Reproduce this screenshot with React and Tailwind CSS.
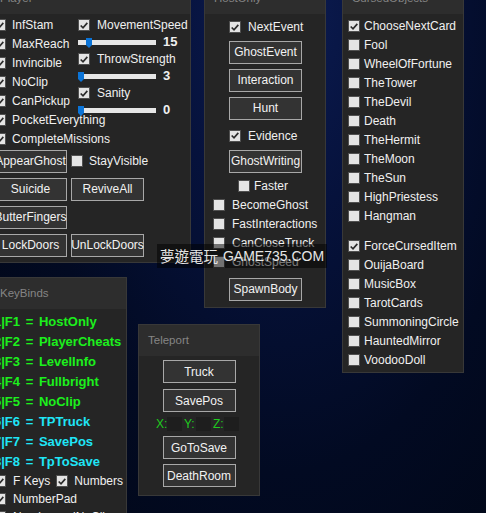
import React from "react";

const Box = ({ checked }) => (
  <span className="w-[12px] h-[12px] shrink-0 bg-[#e4e4e4] border border-[#505050] flex items-center justify-center">
    {checked && (
      <svg viewBox="0 0 12 12" className="w-[11px] h-[11px]">
        <path d="M2 6 L4.8 8.8 L10 2.8" stroke="#2b2b2b" strokeWidth="2" fill="none" />
      </svg>
    )}
  </span>
);

const Check = ({ label, checked, gap = "gap-[4px]", h = "h-[19px]" }) => (
  <div className={`flex items-center ${gap} ${h} whitespace-nowrap`}>
    <Box checked={checked} />
    <span>{label}</span>
  </div>
);

const Btn = ({ children, className = "" }) => (
  <div className={`h-[23px] w-[73px] shrink-0 flex items-center justify-center border-[1.5px] border-[#a8a8a8] bg-[#333333] text-[#f2f2f2] whitespace-nowrap ${className}`}>
    {children}
  </div>
);

const Thumb = () => (
  <svg viewBox="0 0 6 10" className="w-[6px] h-[10px] block">
    <polygon points="0,0 6,0 6,7 3,10 0,7" fill="#0b74d8" />
  </svg>
);

const Window = ({ title, className, children }) => (
  <div className={`absolute bg-[#252525] border border-[#383838] overflow-hidden ${className}`}>
    <div className="h-[31px] bg-[#2d2d2d] pl-[9px] flex items-end pb-[7px] text-[11.5px] text-[#858585]">{title}</div>
    {children}
  </div>
);

const keys = [
  ["1|F1", "HostOnly", "text-[#1cf01c]"],
  ["2|F2", "PlayerCheats", "text-[#1cf01c]"],
  ["3|F3", "LevelInfo", "text-[#1cf01c]"],
  ["4|F4", "Fullbright", "text-[#1cf01c]"],
  ["5|F5", "NoClip", "text-[#1cf01c]"],
  ["6|F6", "TPTruck", "text-[#1fe6f7]"],
  ["7|F7", "SavePos", "text-[#1fe6f7]"],
  ["8|F8", "TpToSave", "text-[#1fe6f7]"],
];

const cards = ["ChooseNextCard", "Fool", "WheelOfFortune", "TheTower", "TheDevil", "Death", "TheHermit", "TheMoon", "TheSun", "HighPriestess", "Hangman"];
const items = ["ForceCursedItem", "OuijaBoard", "MusicBox", "TarotCards", "SummoningCircle", "HauntedMirror", "VoodooDoll"];

export default function App() {
  return (
    <div className="relative w-[486px] h-[513px] overflow-hidden bg-[radial-gradient(ellipse_at_58%_0%,#0c1c52_0%,#06123c_30%,#020a22_65%,#010716_100%)] font-['Liberation_Sans',sans-serif] text-[12px] text-[#f0f0f0]">

      {/* Player */}
      <Window title="Player" className="left-[-10px] top-[-18px] w-[201px] h-[281px]">
        <div className="pl-[3px]">
          <div className="flex">
            <div className="w-[84px] pt-[1.5px] flex flex-col">
              {["InfStam", "MaxReach", "Invincible", "NoClip", "CanPickup", "PocketEverything", "CompleteMissions"].map((l) => (
                <Check key={l} label={l} checked gap="gap-[6px]" />
              ))}
            </div>
            <div className="pt-[2.5px] flex flex-col">
              <Check label="MovementSpeed" checked gap="gap-[7px]" h="h-[17px]" />
              <div className="h-[17px] flex items-center">
                <div className="relative w-[78px] h-[5px] bg-[#e6e6e6]">
                  <div className="absolute left-[8px] top-[-2px]"><Thumb /></div>
                </div>
                <span className="ml-[7px] font-bold text-[13px]">15</span>
              </div>
              <Check label="ThrowStrength" checked gap="gap-[7px]" h="h-[17px]" />
              <div className="h-[17px] flex items-center">
                <div className="relative w-[78px] h-[5px] bg-[#e6e6e6]">
                  <div className="absolute left-0 top-[-2px]"><Thumb /></div>
                </div>
                <span className="ml-[7px] font-bold text-[13px]">3</span>
              </div>
              <Check label="Sanity" checked gap="gap-[7px]" h="h-[17px]" />
              <div className="h-[17px] flex items-center">
                <div className="relative w-[78px] h-[5px] bg-[#e6e6e6]">
                  <div className="absolute left-0 top-[-2px]"><Thumb /></div>
                </div>
                <span className="ml-[7px] font-bold text-[13px]">0</span>
              </div>
            </div>
          </div>
          <div className="mt-[1px] flex flex-col gap-[5px]">
            <div className="flex gap-[4px] items-center">
              <Btn>AppearGhost</Btn>
              <Check label="StayVisible" gap="gap-[6px]" />
            </div>
            <div className="flex gap-[4px]">
              <Btn>Suicide</Btn>
              <Btn>ReviveAll</Btn>
            </div>
            <div className="flex gap-[4px]">
              <Btn>ButterFingers</Btn>
            </div>
            <div className="flex gap-[4px]">
              <Btn>LockDoors</Btn>
              <Btn>UnLockDoors</Btn>
            </div>
          </div>
        </div>
      </Window>

      {/* HostOnly */}
      <Window title="HostOnly" className="left-[204px] top-[-18px] w-[122px] h-[326px]">
        <div className="flex flex-col pt-[3.5px]">
          <div className="pl-[24px]"><Check label="NextEvent" checked gap="gap-[7px]" /></div>
          <Btn className="ml-[24px] mt-[4px]">GhostEvent</Btn>
          <Btn className="ml-[24px] mt-[5px]">Interaction</Btn>
          <Btn className="ml-[24px] mt-[5px]">Hunt</Btn>
          <div className="pl-[24px] mt-[6.5px]"><Check label="Evidence" checked gap="gap-[7px]" /></div>
          <Btn className="ml-[24px] mt-[4.5px]">GhostWriting</Btn>
          <div className="pl-[33px] mt-[3.5px]"><Check label="Faster" gap="gap-[4px]" /></div>
          <div className="pl-[8px] flex flex-col">
            {["BecomeGhost", "FastInteractions", "CanCloseTruck", "GhostSpeed"].map((l) => (
              <Check key={l} label={l} gap="gap-[7px]" />
            ))}
          </div>
          <Btn className="ml-[24px] mt-[6.5px]">SpawnBody</Btn>
        </div>
      </Window>

      {/* CursedObjects */}
      <Window title="CursedObjects" className="left-[342px] top-[-18px] w-[122px] h-[391px]">
        <div className="pl-[5px] pt-[2.5px] flex flex-col">
          {cards.map((l, i) => (
            <Check key={l} label={l} checked={i === 0} />
          ))}
          <div className="h-[11px]" />
          {items.map((l, i) => (
            <Check key={l} label={l} checked={i === 0} />
          ))}
        </div>
      </Window>

      {/* KeyBinds */}
      <Window title="KeyBinds" className="left-[-10px] top-[277px] w-[137px] h-[260px]">
        <div className="pl-[3px] pt-[3px] flex flex-col">
          {keys.map(([k, v, c]) => (
            <div key={k} className={`h-[20px] flex items-center font-bold text-[13px] whitespace-nowrap [word-spacing:2px] ${c}`}>
              {k} = {v}
            </div>
          ))}
          <div className="h-[18px] flex items-center">
            <Check label="F Keys" checked gap="gap-[7px]" h="h-[18px]" />
            <div className="ml-[6px]"><Check label="Numbers" checked gap="gap-[6px]" h="h-[18px]" /></div>
          </div>
          <Check label="NumberPad" checked gap="gap-[7px]" h="h-[18px]" />
          <Check label="NumberpadNoClip" checked gap="gap-[7px]" h="h-[18px]" />
        </div>
      </Window>

      {/* Teleport */}
      <Window title="Teleport" className="left-[138px] top-[324px] w-[122px] h-[172px]">
        <div className="flex flex-col items-center">
          <Btn className="mt-[4px]">Truck</Btn>
          <Btn className="mt-[6px]">SavePos</Btn>
          <div className="mt-[2px] h-[20px] w-full pl-[17px] flex items-center text-[#1fcb1f]">
            <span className="w-[11px]">X:</span>
            <span className="w-[15px] h-[14px] bg-[#1e1e1e]" />
            <span className="ml-[2px] w-[12px]">Y:</span>
            <span className="w-[15px] h-[14px] bg-[#1e1e1e]" />
            <span className="ml-[2px] w-[11px]">Z:</span>
            <span className="w-[15px] h-[14px] bg-[#1e1e1e]" />
          </div>
          <Btn className="mt-[2px]">GoToSave</Btn>
          <Btn className="mt-[5px]">DeathRoom</Btn>
        </div>
      </Window>

      {/* watermark */}
      <div className="absolute left-[157px] top-[244px] w-[170px] h-[24px] bg-black/50 flex items-center justify-center gap-[5px] text-[14px] text-[#e6e6e6] font-['Liberation_Sans','Noto_Sans_CJK_TC',sans-serif] whitespace-nowrap">
        <span className="font-['Noto_Sans_CJK_TC',sans-serif] text-[14.5px]">夢遊電玩</span>
        <span>GAME735.COM</span>
      </div>
    </div>
  );
}
